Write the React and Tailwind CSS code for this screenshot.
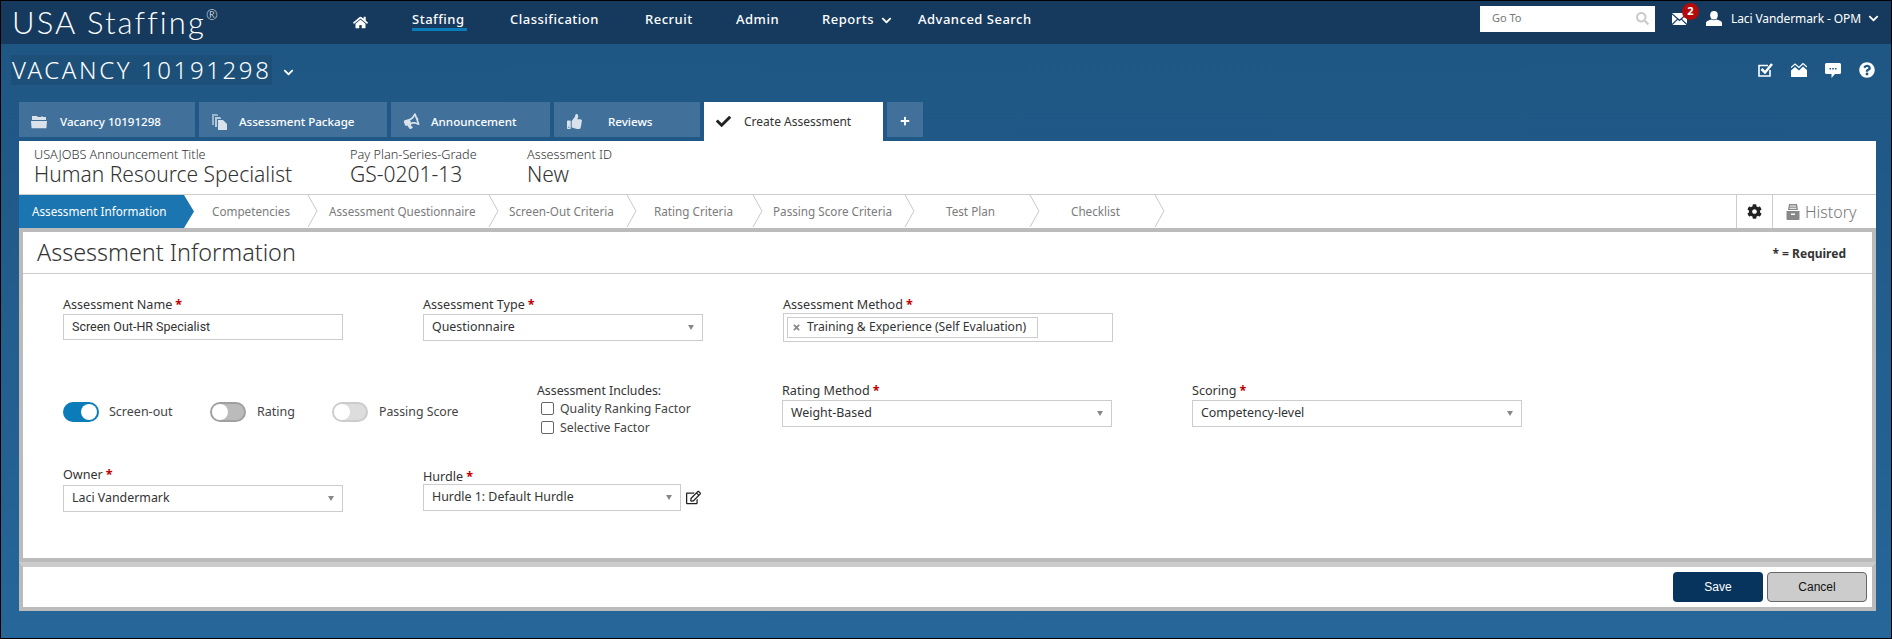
import React from 'react';
import {
  FaHome, FaBullhorn, FaThumbsUp, FaCheck, FaPlus, FaSearch,
  FaChevronDown, FaCog, FaQuestionCircle, FaRegEdit, FaTimes,
} from 'react-icons/fa';

const FolderIcon = ({ className }) => (
  <svg viewBox="0 0 16 14" className={className} fill="currentColor">
    <path d="M1 1h5l1 1h3l1-1 1 1h3v3H1z" />
    <path d="M0 6h16l-.6 7.2H.6z" />
  </svg>
);

const FilesIcon = ({ className }) => (
  <svg viewBox="0 0 15 16" className={className} fill="currentColor">
    <path d="M0 0h5l1 1v1H2v9H0z" opacity="0.6" />
    <path d="M3 3h5l1 1v1H5v8H3z" opacity="0.8" />
    <path d="M6 6h5l4 4v6H6z" />
  </svg>
);

const HornIcon = ({ className }) => <FaBullhorn className={`-rotate-[20deg] ${className}`} />;

const navLinks = [
  { label: 'Classification', w: 'w-[90px]', ml: 'ml-[43px]' },
  { label: 'Recruit', w: 'w-[48px]', ml: 'ml-[45px]' },
  { label: 'Admin', w: 'w-[42px]', ml: 'ml-[43px]' },
];

const tabs = [
  { label: 'Vacancy 10191298', Icon: FolderIcon, w: 'w-[176px]', pl: 'pl-3', gap: 'gap-[13px]', size: 'h-[14px] w-4' },
  { label: 'Assessment Package', Icon: FilesIcon, w: 'w-[188px]', pl: 'pl-[13px]', gap: 'gap-3', size: 'h-4 w-[15px]' },
  { label: 'Announcement', Icon: HornIcon, w: 'w-[159px]', pl: 'pl-[13px]', gap: 'gap-3', size: 'text-[15px]' },
  { label: 'Reviews', Icon: FaThumbsUp, w: 'w-[146px]', pl: 'pl-[13px]', gap: 'gap-[26px]', size: 'text-[15px]' },
];

const steps = [
  { label: 'Competencies', w: 'w-[123px]', pl: 'pl-[18px]' },
  { label: 'Assessment Questionnaire', w: 'w-[181px]', pl: 'pl-[12px]' },
  { label: 'Screen-Out Criteria', w: 'w-[138px]', pl: 'pl-[11px]' },
  { label: 'Rating Criteria', w: 'w-[126px]', pl: 'pl-[18px]' },
  { label: 'Passing Score Criteria', w: 'w-[152px]', pl: 'pl-[11px]' },
  { label: 'Test Plan', w: 'w-[125px]', pl: 'pl-[32px]' },
  { label: 'Checklist', w: 'w-[125px]', pl: 'pl-[32px]' },
];

const Req = () => <span className="ml-[3px] font-bold text-[#c00000]">*</span>;

const Label = ({ children, className = '' }) => (
  <div className={`text-[12.6px] leading-4 text-[#333] ${className}`}>
    {children}
    <Req />
  </div>
);

const Select = ({ value, className = '' }) => (
  <div className={`flex h-[27px] items-center justify-between border border-[#ccc] bg-white pl-2 pr-2 text-[12.4px] text-[#333] ${className}`}>
    <span>{value}</span>
    <svg viewBox="0 0 6 5" className="h-[5px] w-[6px]" fill="#888">
      <path d="M0 0h6L3 5z" />
    </svg>
  </div>
);

const Toggle = ({ on, dim }) => (
  <div className={`flex h-5 w-9 rounded-full border-2 ${on ? 'justify-end border-[#0a7cba] bg-[#0a7cba]' : dim ? 'border-[#ccc] bg-[#ddd]' : 'border-[#a0a0a0] bg-[#bbb]'}`}>
    <div className="h-4 w-4 rounded-full bg-white" />
  </div>
);

const Check = ({ label }) => (
  <div className="flex items-center">
    <div className="ml-1 h-[13px] w-[13px] rounded-[2px] border border-[#666] bg-white" />
    <span className="ml-[6px] text-[12.3px] leading-[19px] text-[#444]">{label}</span>
  </div>
);

const Chevron = () => (
  <svg className="absolute right-[-1px] top-0 h-8 w-[11px]" viewBox="0 0 11 32" fill="none">
    <path d="M1 0 L10 16 L1 32" stroke="#c8c8c8" strokeWidth="1" />
  </svg>
);

export default function App() {
  return (
    <div className="flex h-[639px] w-[1892px] flex-col overflow-hidden border border-black bg-gradient-to-b from-[#1e5582] to-[#266699] font-['Noto_Sans',sans-serif]">
      {/* top bar */}
      <div className="flex h-[43px] shrink-0 items-center bg-[#163a5e] text-white">
        <div className="ml-[11px] w-[330px] whitespace-nowrap font-['Lato',sans-serif] text-[31px] font-light leading-none tracking-[2.1px]">
          USA Staffing<sup className="top-[-14px] text-[14px]">®</sup>
        </div>
        <div className="flex items-center whitespace-nowrap pb-[5px] text-[13px] font-medium tracking-[0.5px]">
          <FaHome className="ml-[11px] mt-[5px] text-[15px]" />
          <div className="relative ml-[44px] w-[55px]">
            Staffing
            <div className="absolute left-0 right-0 top-[18px] h-[3px] bg-[#0a7cba]" />
          </div>
          {navLinks.map((n) => (
            <div key={n.label} className={`${n.ml} ${n.w}`}>{n.label}</div>
          ))}
          <div className="ml-[44px] flex w-[96px] items-center gap-[7px]">
            Reports <FaChevronDown className="text-[11px]" />
          </div>
          <div>Advanced Search</div>
        </div>
        <div className="ml-auto flex items-center pb-2">
          <div className="flex h-[26px] w-[175px] items-center justify-between bg-white pl-3 pr-[6px] text-[11px] text-[#777]">
            Go To
            <FaSearch className="text-[13px] text-[#ccc]" />
          </div>
          <div className="relative ml-[17px] h-[12px] w-[15px]">
            <svg viewBox="0 0 15 12" className="h-3 w-[15px]" fill="#fff">
              <path d="M0 0h15L7.5 6.5zM0 1.5v9.2L5 6zM15 1.5v9.2L10 6zM5.8 6.8l1.7 1.5 1.7-1.5 5.3 5.2H.5z" />
            </svg>
            <div className="absolute left-[10px] top-[-10px] flex h-[17px] w-[17px] items-center justify-center rounded-full bg-[#b50a0a] text-[11px] font-bold">2</div>
          </div>
          <svg viewBox="0 0 16 15" className="ml-[19px] h-[15px] w-4" fill="#fff">
            <ellipse cx="8" cy="4.2" rx="3.8" ry="4.2" />
            <path d="M5.5 8.5c1.5 1 3.5 1 5 0 2.5.6 5.5 1.7 5.5 3.5v3H0v-3c0-1.8 3-2.9 5.5-3.5z" />
          </svg>
          <div className="ml-[9px] w-[127px] whitespace-nowrap text-[12px] tracking-[-0.1px]">Laci Vandermark - OPM</div>
          <FaChevronDown className="ml-[10px] mr-[12px] text-[11px]" />
        </div>
      </div>

      {/* vacancy title */}
      <div className="flex h-[58px] shrink-0 items-center pb-[6px] text-white">
        <div className="ml-[10px] whitespace-nowrap bg-[#1d5079] px-[1px] text-[24px] font-light leading-[30px] tracking-[2.6px]">VACANCY 10191298</div>
        <FaChevronDown className="ml-[11px] mt-1 text-[11px]" />
        <div className="ml-auto mr-4 flex items-center gap-[18px]">
          <svg viewBox="0 0 15 14" className="h-[14px] w-[15px]" fill="none" stroke="#fff">
            <path d="M10 2.5H1V13h11V7" strokeWidth="1.6" />
            <path d="M3.5 6L7 9.5 14 1" strokeWidth="2.5" />
          </svg>
          <svg viewBox="0 0 16 14" className="h-[14px] w-4" fill="#fff">
            <path d="M0 4.5L4 1l4 3.5L12 .5l4 3.5" fill="none" stroke="#fff" strokeWidth="1.2" />
            <path d="M0 7.5L4 4l4 3.5L12 3.5l4 3.5v7H0z" />
          </svg>
          <svg viewBox="0 0 16 15" className="h-[15px] w-4">
            <path fill="#fff" d="M1.5 0h13A1.5 1.5 0 0 1 16 1.5v8a1.5 1.5 0 0 1-1.5 1.5H10l-3.5 4v-4h-5A1.5 1.5 0 0 1 0 9.5v-8A1.5 1.5 0 0 1 1.5 0z" />
            <path fill="#1f5a88" d="M4.5 5h1.6v1.6H4.5zM7.2 5h1.6v1.6H7.2zM9.9 5h1.6v1.6H9.9z" />
          </svg>
          <FaQuestionCircle className="text-[16px]" />
        </div>
      </div>

      {/* tabs */}
      <div className="ml-[18px] flex h-[39px] shrink-0 gap-1 text-white">
        {tabs.map(({ label, Icon, w, pl, gap, size }) => (
          <div key={label} className={`flex h-[35px] items-center bg-[#41719b] pt-1 text-[11.6px] font-medium ${w} ${pl} ${gap}`}>
            <Icon className={`opacity-80 ${size}`} />
            {label}
          </div>
        ))}
        <div className="flex h-[39px] w-[179px] items-center gap-[13px] bg-white pl-3 text-[12px] text-[#333]">
          <FaCheck className="text-[15px] text-[#222]" />
          Create Assessment
        </div>
        <div className="flex h-[35px] w-9 items-center justify-center bg-[#41719b] pt-[3px]">
          <FaPlus className="text-[10px]" />
        </div>
      </div>

      {/* announcement header */}
      <div className="ml-[18px] mr-[15px] flex h-[54px] shrink-0 border-b border-[#ccc] bg-white pl-[15px] pt-[5px] text-[#333]">
        <div className="w-[316px]">
          <div className="text-[12.7px] font-light leading-4">USAJOBS Announcement Title</div>
          <div className="text-[21px] font-light leading-6">Human Resource Specialist</div>
        </div>
        <div className="w-[177px]">
          <div className="text-[12.7px] font-light leading-4">Pay Plan-Series-Grade</div>
          <div className="text-[21px] font-light leading-6">GS-0201-13</div>
        </div>
        <div>
          <div className="text-[12.7px] font-light leading-4">Assessment ID</div>
          <div className="text-[21px] font-light leading-6">New</div>
        </div>
      </div>

      {/* step bar */}
      <div className="ml-[18px] mr-[15px] flex h-[33px] shrink-0 items-stretch bg-white">
        <div className="flex w-[175px] items-center bg-[#1a75b0] pl-[13px] text-[11.7px] text-white [clip-path:polygon(0_0,165px_0,175px_50%,165px_100%,0_100%)]">
          Assessment Information
        </div>
        {steps.map((s) => (
          <div key={s.label} className={`relative flex items-center text-[11.7px] text-[#7b7b7b] ${s.w} ${s.pl}`}>
            {s.label}
            <Chevron />
          </div>
        ))}
        <div className="ml-auto flex w-[37px] items-center justify-center border-x border-[#ccc] text-[15px] text-[#222]">
          <FaCog />
        </div>
        <div className="flex w-[103px] items-center gap-[5px] pl-[13px] text-[16px] font-light text-[#777]">
          <svg viewBox="0 0 14 16" className="h-4 w-[14px]" fill="#888" fillRule="evenodd">
            <path d="M3 0h8l1 6H2zM4 1.5v1h6v-1zM3.6 3.8v1h6.8v-1z" />
            <path d="M.5 7h13v8a1 1 0 0 1-1 1h-11a1 1 0 0 1-1-1zM5 9.5V11h4V9.5z" />
          </svg>
          History
        </div>
      </div>

      {/* main card */}
      <div className="ml-[18px] mr-[15px] flex h-[334px] shrink-0 flex-col border-x-4 border-t-4 border-[#bbb] bg-white">
        <div className="flex h-[42px] shrink-0 items-center justify-between border-b border-[#ccc] pl-[14px] pr-[26px] text-[#333]">
          <div className="text-[23.4px] font-light">Assessment Information</div>
          <div className="mt-[3px] text-[12px] font-bold">* = Required</div>
        </div>
        <div className="flex-1 pl-10 pt-[23px]">
          <div className="flex">
            <div className="w-[360px]">
              <Label>Assessment Name</Label>
              <div className="mt-px flex h-[26px] w-[280px] items-center border border-[#ccc] pl-2 font-['Roboto',sans-serif] text-[12.5px] text-[#333]">Screen Out-HR Specialist</div>
            </div>
            <div className="w-[360px]">
              <Label>Assessment Type</Label>
              <Select value="Questionnaire" className="mt-px w-[280px]" />
            </div>
            <div>
              <Label>Assessment Method</Label>
              <div className="flex h-[29px] w-[330px] items-center border border-[#ccc] pl-[3px]">
                <div className="flex h-[21px] w-[251px] items-center gap-[6px] whitespace-nowrap border border-[#ccc] pl-1 text-[12.2px] text-[#333]">
                  <FaTimes className="text-[9px] text-[#888]" />
                  Training &amp; Experience (Self Evaluation)
                </div>
              </div>
            </div>
          </div>
          <div className="mt-[41px] flex">
            <div className="flex w-[474px] items-center pt-[4px]">
              <Toggle on />
              <span className="ml-[10px] w-[101px] text-[12.5px] text-[#444]">Screen-out</span>
              <Toggle />
              <span className="ml-[11px] w-[75px] text-[12.5px] text-[#444]">Rating</span>
              <Toggle dim />
              <span className="ml-[11px] text-[12.3px] text-[#444]">Passing Score</span>
            </div>
            <div className="w-[245px]">
              <div className="text-[12.3px] leading-4 text-[#333]">Assessment Includes:</div>
              <Check label="Quality Ranking Factor" />
              <Check label="Selective Factor" />
            </div>
            <div className="w-[410px]">
              <Label>Rating Method</Label>
              <Select value="Weight-Based" className="mt-px w-[330px]" />
            </div>
            <div>
              <Label>Scoring</Label>
              <Select value="Competency-level" className="mt-px w-[330px]" />
            </div>
          </div>
          <div className="mt-[30px] flex">
            <div className="w-[360px]">
              <Label>Owner</Label>
              <Select value="Laci Vandermark" className="mt-[2px] w-[280px]" />
            </div>
            <div>
              <Label className="mt-[2px]">Hurdle</Label>
              <div className="-mt-px flex items-center">
                <Select value="Hurdle 1: Default Hurdle" className="w-[258px]" />
                <FaRegEdit className="ml-[5px] text-[15px] text-[#222]" />
              </div>
            </div>
          </div>
        </div>
        <div className="h-[4px] shrink-0 bg-[#bbb]" />
      </div>

      {/* footer */}
      <div className="ml-[18px] mr-[15px] flex h-[49px] shrink-0 items-center justify-end gap-1 border-x-4 border-b-4 border-t-[5px] border-x-[#bbb] border-b-[#bbb] border-t-[#ccc] bg-white pr-[5px] font-['Liberation_Sans',sans-serif] text-[12px]">
        <button className="h-[30px] w-[90px] rounded bg-[#06345c] text-white">Save</button>
        <button className="h-[30px] w-[100px] rounded border border-[#666] bg-[#ccc] text-[#111]">Cancel</button>
      </div>
    </div>
  );
}
